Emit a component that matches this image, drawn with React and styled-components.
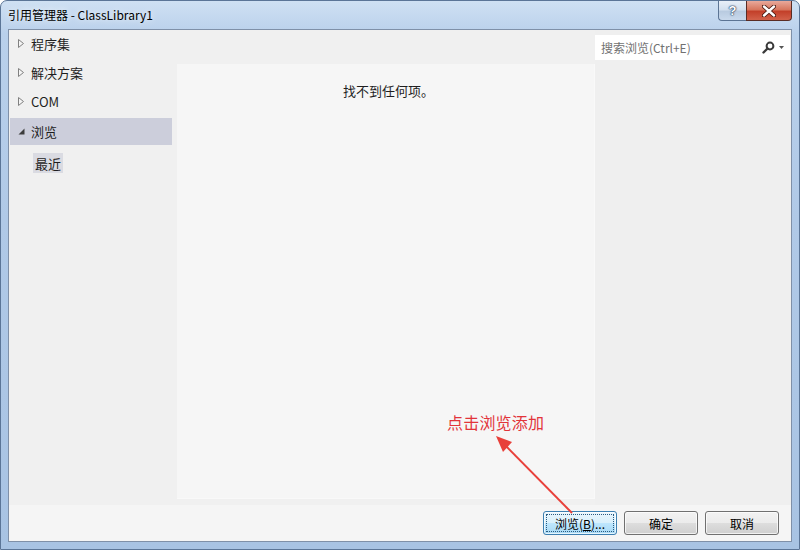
import React from "react";
import styled, { createGlobalStyle } from "styled-components";

const GlobalStyle = createGlobalStyle`
  html, body {
    margin: 0;
    padding: 0;
    overflow: hidden;
    background: #ffffff;
  }
  * {
    box-sizing: border-box;
  }
`;

const font = `"Noto Sans CJK SC", "Noto Sans", "Liberation Sans", sans-serif`;

const Window = styled.div`
  position: relative;
  width: 800px;
  height: 550px;
  display: flex;
  flex-direction: column;
  border: 1px solid #5b7597;
  border-radius: 7px 7px 0 0;
  background: linear-gradient(
    180deg,
    #cfe0f3 0%,
    #b9d0eb 6%,
    #b0c9e7 40%,
    #a8c3e3 100%
  );
  font-family: ${font};
  overflow: hidden;
`;

const TitleBar = styled.div`
  height: 28px;
  display: flex;
  align-items: flex-start;
  padding-left: 7px;
`;

const Title = styled.div`
  font-size: 12px;
  line-height: 28px;
  color: #000;
  text-shadow: 0 0 6px rgba(255, 255, 255, 0.9);
`;

const Caption = styled.div`
  margin-left: auto;
  margin-right: 7px;
  display: flex;
`;

const HelpButton = styled.div`
  width: 28px;
  height: 20px;
  border: 1px solid #5c7494;
  border-top: none;
  border-right: none;
  border-radius: 0 0 0 4px;
  background: linear-gradient(180deg, #e8eff8 0%, #d3e0ef 45%, #b9cbe0 55%, #c9d9ec 100%);
  display: flex;
  align-items: center;
  justify-content: center;
  font-family: "Liberation Sans", sans-serif;
  font-weight: bold;
  font-size: 13px;
  color: #fff;
  text-shadow: 0 0 1px #233b5b, 0 0 1px #233b5b, 0 0 2px #233b5b;
`;

const CloseButton = styled.div`
  width: 46px;
  height: 20px;
  border: 1px solid #5a2c24;
  border-top: none;
  border-radius: 0 0 4px 0;
  background: linear-gradient(180deg, #e9a99b 0%, #d7775f 45%, #c3402a 55%, #d2614a 100%);
  display: flex;
  align-items: center;
  justify-content: center;
`;

const Client = styled.div`
  flex: 1;
  margin: 0 7px 7px 7px;
  border: 1px solid #7f90a8;
  background: #f0f0f0;
  display: flex;
  flex-direction: column;
  min-height: 0;
`;

const Main = styled.div`
  flex: 1;
  display: flex;
  min-height: 0;
`;

const Sidebar = styled.div`
  width: 168px;
  padding: 0 5px 0 1px;
  display: flex;
  flex-direction: column;
`;

const TreeRow = styled.div`
  height: 27px;
  margin-bottom: 2px;
  display: flex;
  align-items: center;
  padding-left: 8px;
  font-size: 13px;
  color: #1e1e1e;
  background: ${(p) => (p.$selected ? "#cccedb" : "transparent")};
  ${(p) => p.$selected && "margin-top: 1px;"}
`;

const Arrow = styled.span`
  width: 8px;
  height: 10px;
  display: flex;
  align-items: center;
  margin-right: 5px;
`;

const ChildItem = styled.div`
  align-self: flex-start;
  margin: 6px 0 0 23px;
  height: 20px;
  padding: 0 2px;
  display: flex;
  align-items: center;
  font-size: 13px;
  color: #1e1e1e;
  background: #dadbe2;
`;

const Center = styled.div`
  width: 418px;
  display: flex;
  flex-direction: column;
  padding-top: 34px;
  padding-bottom: 6px;
`;

const ListPanel = styled.div`
  flex: 1;
  background: #f6f6f6;
  border-right: 1px solid #f9f9f9;
  border-bottom: 1px solid #f9f9f9;
  text-align: center;
  padding: 19px 0 0 6px;
  font-size: 13px;
  color: #1e1e1e;
  line-height: 16px;
`;

const RightPane = styled.div`
  flex: 1;
  padding-top: 5px;
  background: #efefef;
`;

const SearchBox = styled.div`
  height: 25px;
  margin-right: 1px;
  background: #ffffff;
  display: flex;
  align-items: center;
  padding: 0 6px 0 6px;
  font-size: 12px;
  color: #717171;
`;

const SearchIcons = styled.div`
  margin-left: auto;
  display: flex;
  align-items: center;
  gap: 4px;
`;

const Footer = styled.div`
  height: 36px;
  background: #f5f5f5;
  display: flex;
  justify-content: flex-end;
  align-items: flex-start;
  padding: 6px 12px 0 0;
  gap: 7px;
`;

const Button = styled.div`
  position: relative;
  width: 74px;
  height: 24px;
  border: 1px solid ${(p) => (p.$focused ? "#3c7fb1" : "#707070")};
  border-radius: 3px;
  background: ${(p) =>
    p.$focused
      ? "linear-gradient(180deg, #eaf6fd 0%, #d9f0fc 50%, #bee6fd 51%, #a7d9f5 100%)"
      : "linear-gradient(180deg, #f2f2f2 0%, #ebebeb 50%, #dddddd 51%, #cfcfcf 100%)"};
  box-shadow: inset 0 0 0 1px rgba(255, 255, 255, 0.7);
  display: flex;
  align-items: center;
  justify-content: center;
  font-size: 12px;
  color: #000;

  ${(p) =>
    p.$focused &&
    `
    &::after {
      content: "";
      position: absolute;
      inset: 2px;
      border: 1px dotted #2a5a80;
    }
  `}
`;

const Underline = styled.span`
  text-decoration: underline;
`;

const Note = styled.div`
  position: absolute;
  left: 446px;
  top: 409px;
  font-size: 16px;
  color: #e2343a;
  letter-spacing: 0.2px;
`;

const NoteArrow = styled.svg`
  position: absolute;
  left: 0;
  top: 0;
  pointer-events: none;
`;

const Collapsed = () => (
  <svg width="6" height="9" viewBox="0 0 6 9">
    <path d="M0.5 0.5 L5.5 4.5 L0.5 8.5 Z" fill="#f4f4f4" stroke="#808080" strokeWidth="1" />
  </svg>
);

const Expanded = () => (
  <svg width="7" height="7" viewBox="0 0 7 7">
    <path d="M6.5 0.5 L6.5 6.5 L0.5 6.5 Z" fill="#3c3c3c" />
  </svg>
);

const tree = [
  { label: "程序集" },
  { label: "解决方案" },
  { label: "COM" },
  { label: "浏览", open: true },
];

export default function App() {
  return (
    <>
      <GlobalStyle />
      <Window>
        <TitleBar>
          <Title>引用管理器 - ClassLibrary1</Title>
          <Caption>
            <HelpButton>?</HelpButton>
            <CloseButton>
              <svg width="14" height="12" viewBox="0 0 14 12">
                <path
                  d="M2 1.5 L12 10.5 M12 1.5 L2 10.5"
                  stroke="#4a1a12"
                  strokeWidth="4.2"
                  strokeLinecap="round"
                />
                <path
                  d="M2 1.5 L12 10.5 M12 1.5 L2 10.5"
                  stroke="#fff"
                  strokeWidth="2.4"
                  strokeLinecap="round"
                />
              </svg>
            </CloseButton>
          </Caption>
        </TitleBar>

        <Client>
          <Main>
            <Sidebar>
              {tree.map((t) => (
                <TreeRow key={t.label} $selected={t.open}>
                  <Arrow>{t.open ? <Expanded /> : <Collapsed />}</Arrow>
                  {t.label}
                </TreeRow>
              ))}
              <ChildItem>最近</ChildItem>
            </Sidebar>

            <Center>
              <ListPanel>找不到任何项。</ListPanel>
            </Center>

            <RightPane>
              <SearchBox>
                搜索浏览(Ctrl+E)
                <SearchIcons>
                  <svg width="13" height="13" viewBox="0 0 13 13">
                    <circle cx="8" cy="5" r="3.4" fill="none" stroke="#3a3a3a" strokeWidth="2" />
                    <path d="M5.5 7.5 L1.5 11.5" stroke="#3a3a3a" strokeWidth="2.4" strokeLinecap="round" />
                  </svg>
                  <svg width="5" height="3" viewBox="0 0 5 3">
                    <path d="M0 0 L5 0 L2.5 3 Z" fill="#555" />
                  </svg>
                </SearchIcons>
              </SearchBox>
            </RightPane>
          </Main>

          <Footer>
            <Button $focused>
              浏览(<Underline>B</Underline>)...
            </Button>
            <Button>确定</Button>
            <Button>取消</Button>
          </Footer>
        </Client>

        <Note>点击浏览添加</Note>
        <NoteArrow width="800" height="550" viewBox="0 0 800 550">
          <line x1="571" y1="512" x2="503" y2="443" stroke="#e8403a" strokeWidth="2" />
          <path d="M495 435 L511 441 L502 451 Z" fill="#e8403a" />
        </NoteArrow>
      </Window>
    </>
  );
}
